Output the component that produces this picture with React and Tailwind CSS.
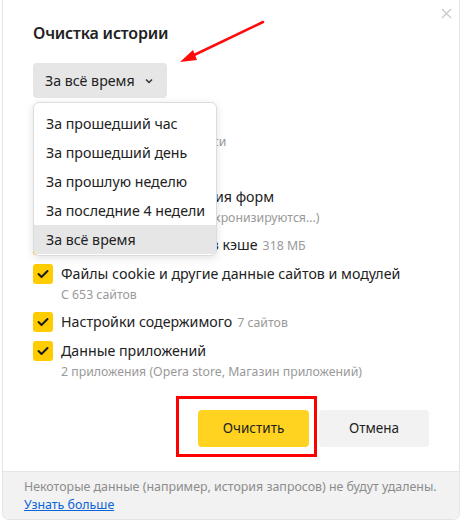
import React from "react";

function Check() {
  return (
    <span className="mt-[1px] flex h-[20px] w-[20px] shrink-0 items-center justify-center rounded-[3px] bg-[#ffcc00]">
      <svg width="12" height="10" viewBox="0 0 12 10" fill="none">
        <path d="M1.5 5 L4.5 8 L10.5 2" stroke="#1a1a1a" strokeWidth="2" strokeLinecap="round" strokeLinejoin="round" />
      </svg>
    </span>
  );
}

function Row({ label, extra, sub }) {
  return (
    <div className="flex gap-[8px]">
      <Check />
      <div className="flex flex-col">
        <div className="text-[14.2px] leading-[22px] text-[#222] whitespace-nowrap">
          {label}
          {extra && <span className="ml-[5px] text-[12.3px] text-[#999]">{extra}</span>}
        </div>
        {sub && <div className="text-[12.3px] leading-[20px] text-[#999] whitespace-nowrap">{sub}</div>}
      </div>
    </div>
  );
}

export default function App() {
  const items = ["За прошедший час", "За прошедший день", "За прошлую неделю", "За последние 4 недели", "За всё время"];
  return (
    <div className="relative h-[522px] w-[462px] overflow-hidden bg-white" style={{ fontFamily: '"Noto Sans", "Open Sans", sans-serif' }}>
      <div className="relative mx-[2px] flex h-[520px] flex-col overflow-hidden rounded-b-[7px] border-x border-b border-[#e4e4e4] bg-white">
        <button className="absolute right-[6px] top-[6px] flex h-[14px] w-[14px] items-center justify-center">
          <svg width="11" height="11" viewBox="0 0 11 11">
            <path d="M1 1 L10 10 M10 1 L1 10" stroke="#c8c8c8" strokeWidth="1.2" />
          </svg>
        </button>
        <div className="relative flex-1 px-[30px] pt-[21px]">
          <h1 className="text-[16px] font-semibold leading-[24px] tracking-[-0.2px] text-[#222]">Очистка истории</h1>
          <div className="mt-[18px] flex">
            <button className="flex h-[35px] items-center gap-[10px] rounded-[4px] bg-[#e6e6e6] pl-[12px] pr-[14px] text-[14.2px] text-[#222]">
              <span>За всё время</span>
              <svg width="8" height="6" viewBox="0 0 8 6">
                <path d="M1 1.5 L4 4.5 L7 1.5" stroke="#333" strokeWidth="1.5" fill="none" />
              </svg>
            </button>
          </div>
          <div className="mt-[12px] flex flex-col gap-[6px]">
            <Row label="История просмотров" sub="С 156 сайтов, 12 942 записи" />
            <Row label="История загрузок" />
            <Row label="Данные автозаполнения форм" sub={"Адреса и телефоны\u2003(синхронизируются...)"} />
            <Row label="Файлы, сохранённые в кэше" extra="318 МБ" />
            <Row label="Файлы cookie и другие данные сайтов и модулей" sub="С 653 сайтов" />
            <Row label="Настройки содержимого" extra="7 сайтов" />
            <Row label="Данные приложений" sub="2 приложения (Opera store, Магазин приложений)" />
          </div>
          <div className="mt-[28px] flex justify-end gap-[10px]">
            <button className="h-[37px] w-[111px] rounded-[4px] bg-[#ffd31f] text-[13.5px] text-[#222]">Очистить</button>
            <button className="h-[37px] w-[110px] rounded-[4px] bg-[#f2f2f2] text-[13.5px] text-[#222]">Отмена</button>
          </div>

          <div className="absolute left-[30px] top-[102px] w-[184px] rounded-[6px] border border-[#dcdcdc] bg-white pb-[1px] pt-[6px] shadow-[0_2px_8px_rgba(0,0,0,0.12)]">
            {items.map((t, i) => (
              <div key={t} className={"flex h-[29px] items-center pl-[12px] text-[14.2px] text-[#222] whitespace-nowrap " + (i === 4 ? "bg-[#e6e6e6]" : "")}>
                {t}
              </div>
            ))}
          </div>
        </div>
        <div className="border-t border-[#e6e6e6] bg-[#f2f2f2] px-[21px] pb-[5px] pt-[6px] text-[12.4px] leading-[18px]">
          <div className="text-[#8c8c8c] whitespace-nowrap">Некоторые данные (например, история запросов) не будут удалены.</div>
          <a href="#" className="text-[#0a64d8] underline">Узнать больше</a>
        </div>
      </div>

      <svg className="pointer-events-none absolute left-0 top-0" width="462" height="522">
        <line x1="263" y1="22" x2="190" y2="57" stroke="#ff0a0a" strokeWidth="2.5" strokeLinecap="round" />
        <polygon points="180,62 193,50 197,60" fill="#ff0a0a" />
      </svg>
      <div className="pointer-events-none absolute left-[176px] top-[396px] h-[61px] w-[141px] border-[3px] border-[#ff0000]" />
    </div>
  );
}
